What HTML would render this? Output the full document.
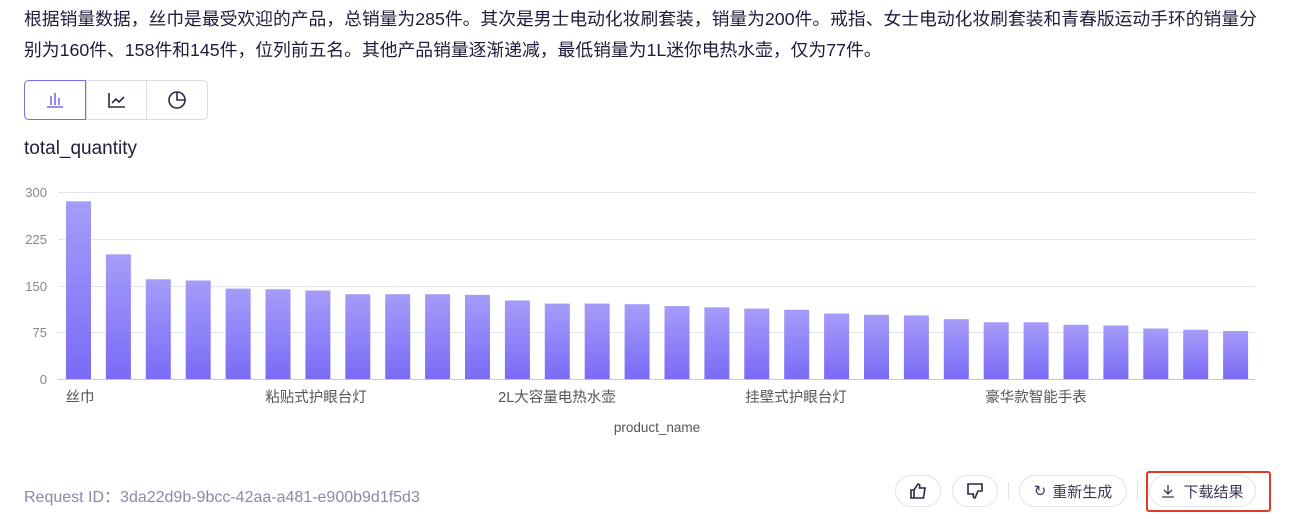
<!DOCTYPE html>
<html><head><meta charset="utf-8"><style>
body{margin:0;background:#fff;font-family:"Liberation Sans","Noto Sans CJK SC",sans-serif;color:#1f1d3a;width:1293px;height:519px;overflow:hidden;position:relative}
.p{position:absolute;left:24px;top:4px;font-size:17.8px;line-height:31px;white-space:nowrap}
.tabs{position:absolute;left:24px;top:80px;width:182px;height:38px;border:1px solid #dcdbe8;border-radius:5px;display:flex}
.tabs div{flex:1;display:flex;align-items:center;justify-content:center;border-left:1px solid #dcdbe8}
.tabs div:first-child{border:1px solid #7b6cf6;border-radius:5px 0 0 5px;margin:-1px 0 -1px -1px}
.t{position:absolute;left:24px;top:138px;font-size:19px}
.btn{position:absolute;top:475px;height:32px;border:1px solid #e3e3ea;border-radius:17px;display:flex;align-items:center;justify-content:center;font-size:15px;color:#3b3a55;box-sizing:border-box}
</style></head><body>
<div class="p">根据销量数据，丝巾是最受欢迎的产品，总销量为285件。其次是男士电动化妆刷套装，销量为200件。戒指、女士电动化妆刷套装和青春版运动手环的销量分<br>别为160件、158件和145件，位列前五名。其他产品销量逐渐递减，最低销量为1L迷你电热水壶，仅为77件。</div>
<div class="tabs">
<div><svg width="18" height="16"><g stroke="#7b6cf6" stroke-width="1.6"><path d="M1 15h16M5 4v9M9 1v12M13 6v7"/></g></svg></div>
<div><svg width="18" height="16" fill="none" stroke="#2a2845" stroke-width="1.6"><path d="M1 1v14h16M4 11l4-4 3 3 5-5"/></svg></div>
<div><svg width="20" height="20" fill="none" stroke="#2a2845" stroke-width="1.6"><circle cx="10" cy="10" r="8"/><path d="M10 2v8h8"/></svg></div>
</div>
<div class="t">total_quantity</div>
<svg style="position:absolute;left:0;top:180px" width="1293" height="270" font-family="Liberation Sans,Noto Sans CJK SC,sans-serif">
<defs><linearGradient id="g" x1="0" y1="0" x2="0" y2="1"><stop offset="0" stop-color="#a59cf9"/><stop offset="1" stop-color="#7a6bf6"/></linearGradient></defs>
<g stroke="#e4e4ea"><path d="M58 12.5H1255M58 59.5H1255M58 106.5H1255M58 152.5H1255"/></g>
<path d="M58 199.5H1255" stroke="#c9c9d6"/>
<g font-size="13" fill="#888" text-anchor="end"><text x="47" y="17">300</text><text x="47" y="64">225</text><text x="47" y="111">150</text><text x="47" y="157">75</text><text x="47" y="204">0</text></g>
<g fill="url(#g)" id="bars"></g>
<g font-size="14.5" fill="#555" text-anchor="middle"><text x="80" y="222">丝巾</text><text x="316" y="222">粘贴式护眼台灯</text><text x="557" y="222">2L大容量电热水壶</text><text x="796" y="222">挂壁式护眼台灯</text><text x="1036" y="222">豪华款智能手表</text><text x="657" y="252" font-size="13.5">product_name</text></g>
</svg>
<script>
var v=[285,200,160,158,145,144,142,136,136,136,135,126,121,121,120,117,115,113,111,105,103,102,96,91,91,87,86,81,79,77],s='';
v.forEach(function(x,i){var h=x*187/300;s+='<rect x="'+(66+i*39.9)+'" y="'+(199-h)+'" width="25" height="'+h+'"/>';});
document.getElementById('bars').innerHTML=s;
</script>
<div style="position:absolute;left:24px;top:483px;font-size:16px;color:#8a8aa0">Request ID：3da22d9b-9bcc-42aa-a481-e900b9d1f5d3</div>
<div class="btn" style="left:895px;width:46px"><svg width="18" height="18" fill="none" stroke="#2a2845" stroke-width="1.6"><path d="M2 8h3v8H2zM5 8l4-6c2 0 2 2 1.5 4H16l-1.5 10H5"/></svg></div>
<div class="btn" style="left:952px;width:46px"><svg width="18" height="18" fill="none" stroke="#2a2845" stroke-width="1.6"><path d="M2 2h14v7h-4l-3 7c-2 0-2-2-1.5-4H2z"/></svg></div>
<div style="position:absolute;left:1008px;top:482px;width:1px;height:18px;background:#e0e0e8"></div>
<div class="btn" style="left:1019px;width:108px"><span style="font-size:15px;margin-right:6px">↻</span>重新生成</div>
<div style="position:absolute;left:1137px;top:482px;width:1px;height:18px;background:#e0e0e8"></div>
<div class="btn" style="left:1149px;width:107px"><svg width="14" height="14" fill="none" stroke="#3b3a55" stroke-width="1.3" style="margin-right:8px"><path d="M7 1v9M3 6l4 4 4-4M1 13h12"/></svg>下载结果</div>
<div style="position:absolute;left:1146px;top:471px;width:125px;height:41px;border:2px solid #e03a2a;border-radius:3px;box-sizing:border-box"></div>
</body></html>
